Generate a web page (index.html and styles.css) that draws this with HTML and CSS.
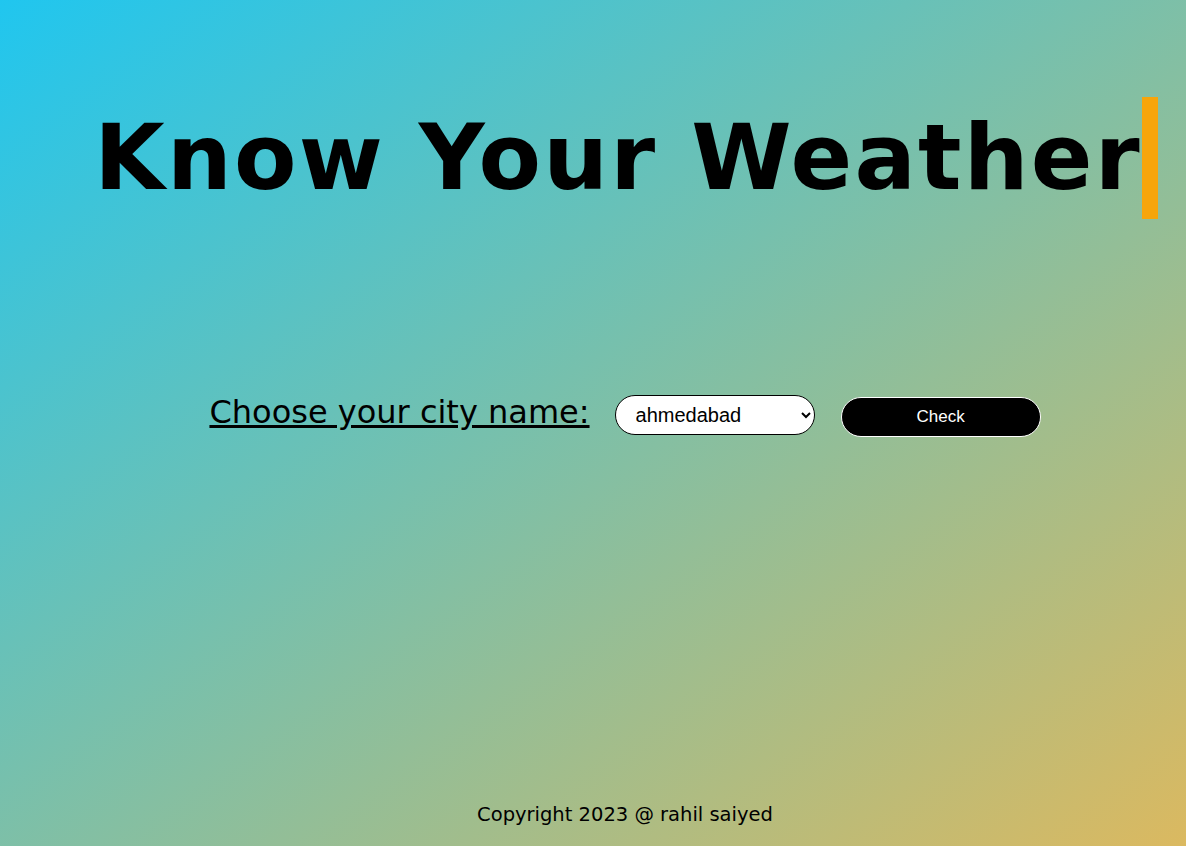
FILE: index.html
```html
<!DOCTYPE html>
<html lang="en">
<head>
<meta charset="utf-8">
<title>Know Your Weather</title>
<link rel="stylesheet" href="styles.css">
</head>
<body>
<div class="page">
  <header class="hero">
    <h1 class="title">Know Your Weather</h1>
  </header>
  <main class="form-row">
    <label class="city-label" for="city">Choose your city name:</label>
    <select class="city-select" id="city">
      <option>ahmedabad</option>
    </select>
    <button class="check-btn" type="button">Check</button>
  </main>
  <footer class="footer">Copyright 2023 @ rahil saiyed</footer>
</div>
</body>
</html>
```

FILE: styles.css
```css
html, body {
  margin: 0;
  padding: 0;
  height: 100%;
}
body {
  background: linear-gradient(to bottom right, #20c6ef, #dbb960);
  font-family: "DejaVu Sans", sans-serif;
  color: #000;
}
.page {
  height: 846px;
  display: flex;
  flex-direction: column;
  align-items: center;
}
.hero {
  display: flex;
  justify-content: center;
  padding-top: 97px;
  padding-left: 66px;
}
.title {
  margin: 0;
  font-size: 91px;
  font-weight: bold;
  line-height: 122px;
  letter-spacing: 2.2px;
  white-space: nowrap;
  border-right: 16px solid #f7a50b;
  padding-right: 0;
}
.form-row {
  margin-top: 174px;
  padding-left: 64px;
  display: flex;
  align-items: center;
}
.city-label {
  font-size: 32px;
  text-decoration: underline;
  margin-right: 25px;
  margin-top: -6px;
}
.city-select {
  width: 200px;
  height: 40px;
  border: 1px solid #000;
  border-radius: 20px;
  background: #fff;
  font-family: "Liberation Sans", Arial, sans-serif;
  font-size: 20px;
  padding: 0 0 0 16px;
  margin-right: 26px;
  color: #000;
}
.check-btn {
  width: 200px;
  height: 40px;
  margin-top: 4px;
  background: #000;
  color: #fff;
  border: 1px solid #fff;
  border-radius: 20px;
  font-family: "Liberation Sans", Arial, sans-serif;
  font-size: 17px;
}
.footer {
  margin-top: auto;
  margin-bottom: 20px;
  font-size: 19.5px;
  padding-left: 64px;
}
```
